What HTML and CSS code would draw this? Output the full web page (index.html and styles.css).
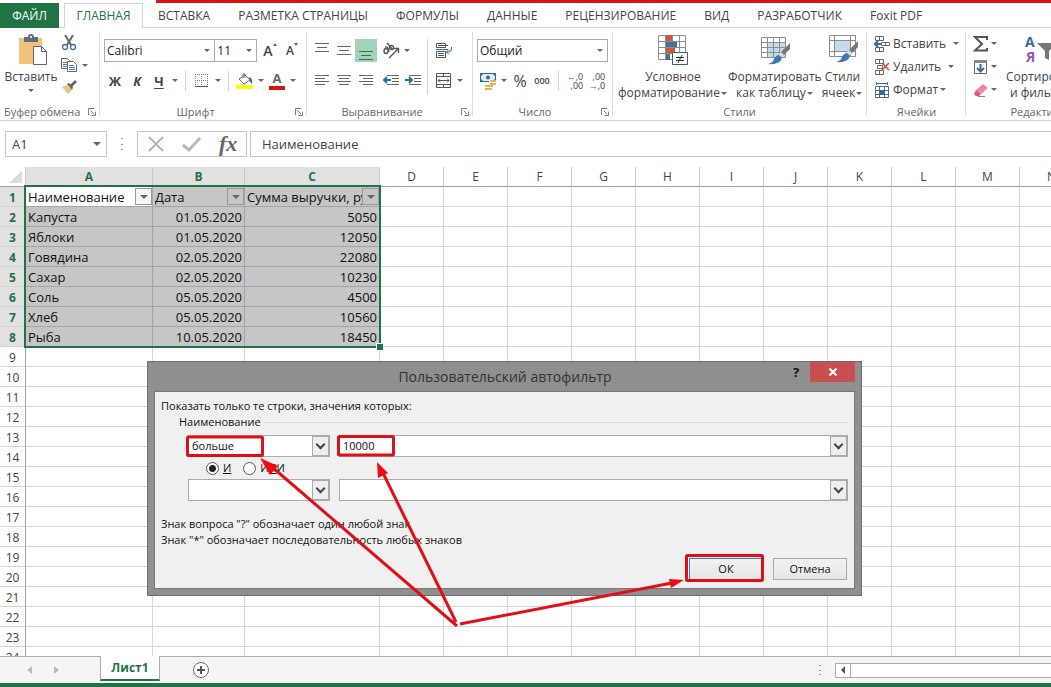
FILE: index.html
```html
<!DOCTYPE html>
<html lang="ru">
<head>
    <meta charset="UTF-8">
    <meta name="viewport" content="width=device-width, initial-scale=1.0">
    <title>Пользовательский автофильтр</title>
    <link rel="stylesheet" href="styles.css">
</head>
<body>
    <div class="top-line"></div>
    <nav class="tabs">
        <button class="tab tab-file">ФАЙЛ</button>
        <button class="tab tab-active">ГЛАВНАЯ</button>
        <button class="tab">ВСТАВКА</button>
        <button class="tab">РАЗМЕТКА СТРАНИЦЫ</button>
        <button class="tab">ФОРМУЛЫ</button>
        <button class="tab">ДАННЫЕ</button>
        <button class="tab">РЕЦЕНЗИРОВАНИЕ</button>
        <button class="tab">ВИД</button>
        <button class="tab">РАЗРАБОТЧИК</button>
        <button class="tab">Foxit PDF</button>
    </nav>

    <div class="ribbon">
        <!-- Clipboard -->
        <section class="group group-clipboard">
            <div class="group-content">
                <button class="big-button">
                    <svg width="32" height="32" viewBox="0 0 32 32">
                        <rect x="4" y="4" width="23" height="26" fill="#f0c27b"/>
                        <path d="M9 3h4q0-3 3-3t3 3h4v5H9z" fill="#5f6c7b"/>
                        <circle cx="16" cy="3" r="1" fill="#fff"/>
                        <path d="M18.500 12.500h8l5 5v13h-13z" fill="#fff" stroke="#666"/>
                        <path d="M26.500 12.500v5h5" fill="none" stroke="#666"/>
                    </svg>
                    <span>Вставить</span>
                    <i class="caret"></i>
                </button>
                <div class="icon-column">
                    <div class="row">
                        <button class="icon" aria-label="Вырезать">
                            <svg width="16" height="16" viewBox="0 0 16 16" fill="none">
                                <path d="M4 0l6 10M12 0L6 10" stroke="#666" stroke-width="2"/>
                                <circle cx="4" cy="12" r="2.500" stroke="#3f6f9f" stroke-width="1.300"/>
                                <circle cx="12" cy="12" r="2.500" stroke="#3f6f9f" stroke-width="1.300"/>
                            </svg>
                        </button>
                    </div>
                    <div class="row">
                        <button class="icon" aria-label="Копировать">
                            <svg width="16" height="16" viewBox="0 0 16 16" fill="#fff" stroke="#666">
                                <path d="M.5 1.500h6l2 2v8h-8z"/>
                                <path d="M2 5.500h4M2 7.500h4M2 9.500h4" stroke="#4f7fae"/>
                                <path d="M6.500 4.500h6l3 3v7h-9z"/>
                                <path d="M8 8.500h5M8 10.500h6M8 12.500h6" stroke="#4f7fae"/>
                            </svg>
                        </button>
                        <i class="caret"></i>
                    </div>
                    <div class="row">
                        <button class="icon" aria-label="Формат по образцу">
                            <svg width="16" height="16" viewBox="0 0 16 16">
                                <path d="M1 8l5-2 5 5-4 4z" fill="#f0c27b"/>
                                <path d="M6 5l2-1 4 4-1 3z" fill="#666"/>
                                <path d="M9 6l5-5 2 2-5 5z" fill="#666"/>
                            </svg>
                        </button>
                    </div>
                </div>
            </div>
            <div class="group-label"><span>Буфер обмена</span><svg class="launcher" viewBox="0 0 9 9"><path d="M.5 8V.5H7M3 3l4 4M8.500 4v4.500H4" fill="none" stroke="#666"/></svg></div>
        </section>

        <!-- Font -->
        <section class="group group-font">
            <div class="group-content stacked">
                <div class="row">
                    <label class="combo font-name"><select aria-label="Шрифт"><option>Calibri</option></select><i class="caret"></i></label>
                    <label class="combo font-size"><select aria-label="Размер"><option>11</option></select><i class="caret"></i></label>
                    <button class="icon grow">A<i></i></button>
                    <button class="icon grow shrink">A<i></i></button>
                </div>
                <div class="row">
                    <button class="icon letter">Ж</button>
                    <button class="icon letter italic">К</button>
                    <button class="icon letter underline">Ч</button>
                    <i class="caret"></i>
                    <i class="separator"></i>
                    <button class="icon" aria-label="Границы">
                        <svg width="14" height="14" viewBox="0 0 14 14" fill="none" stroke="#777">
                            <path d="M0 .5h13M0 6.500h13M.5 0v13M6.500 0v13M12.500 0v13" stroke-dasharray="1 1"/>
                            <path d="M0 12.500h13" stroke="#555"/>
                        </svg>
                    </button>
                    <i class="caret"></i>
                    <i class="separator"></i>
                    <button class="icon" aria-label="Цвет заливки">
                        <svg width="18" height="16" viewBox="0 0 18 16">
                            <path d="M3 6l6-4 5 5-6 4z" fill="#fff" stroke="#666"/>
                            <path d="M7 5V1q1-1 2 0v4" fill="none" stroke="#666"/>
                            <path d="M13 4q4 1 3 7q-2-1-3-5z" fill="#3f6f9f"/>
                            <path d="M0 12h17v4H0z" fill="#ff0"/>
                        </svg>
                    </button>
                    <i class="caret"></i>
                    <button class="icon letter font-color">A</button>
                    <i class="caret"></i>
                </div>
            </div>
            <div class="group-label"><span>Шрифт</span><svg class="launcher" viewBox="0 0 9 9"><path d="M.5 8V.5H7M3 3l4 4M8.500 4v4.500H4" fill="none" stroke="#666"/></svg></div>
        </section>

        <!-- Alignment -->
        <section class="group group-align">
            <div class="group-content">
                <div class="stacked align-main">
                    <div class="row">
                        <button class="icon" aria-label="По верхнему краю"><svg width="14" height="18" viewBox="0 0 14 18" stroke="#666"><path d="M0 1.500h14M2 5.500h10M0 9.500h14"/></svg></button>
                        <button class="icon" aria-label="По середине"><svg width="14" height="18" viewBox="0 0 14 18" stroke="#666"><path d="M0 4.500h14M2 8.500h10M0 12.500h14"/></svg></button>
                        <button class="icon pressed" aria-label="По нижнему краю"><svg width="14" height="18" viewBox="0 0 14 18" stroke="#3f6b58"><path d="M0 9.500h14M2 13.500h10M0 17.500h14"/></svg></button>
                        <button class="icon gap-left" aria-label="Ориентация">
                            <svg width="18" height="16" viewBox="0 0 18 16" fill="none" stroke="#555" stroke-width="1.400">
                                <ellipse cx="4" cy="8" rx="2" ry="2.500"/><path d="M3 4q3-1 4 5"/>
                                <path d="M5 0l6 7"/><circle cx="9.500" cy="4.500" r="2"/>
                                <path d="M7 15l9-9M12 5.500h4.500V10"/>
                            </svg>
                        </button>
                        <i class="caret"></i>
                    </div>
                    <div class="row">
                        <button class="icon" aria-label="По левому краю"><svg width="14" height="14" viewBox="0 0 14 14" stroke="#666"><path d="M0 1.500h14M0 4.500h10M0 7.500h14M0 10.500h10"/></svg></button>
                        <button class="icon" aria-label="По центру"><svg width="14" height="14" viewBox="0 0 14 14" stroke="#666"><path d="M0 1.500h14M2 4.500h10M0 7.500h14M2 10.500h10"/></svg></button>
                        <button class="icon" aria-label="По правому краю"><svg width="14" height="14" viewBox="0 0 14 14" stroke="#666"><path d="M0 1.500h14M4 4.500h10M0 7.500h14M4 10.500h10"/></svg></button>
                        <button class="icon gap-left" aria-label="Уменьшить отступ"><svg width="16" height="14" viewBox="0 0 16 14" fill="none" stroke="#666"><path d="M4 1.500h12M9 4.500h7M9 7.500h7M4 10.500h12"/><path d="M8 6H1M4 3L1 6l3 3" stroke="#2f6ca5" stroke-width="2"/></svg></button>
                        <button class="icon" aria-label="Увеличить отступ"><svg width="16" height="14" viewBox="0 0 16 14" fill="none" stroke="#666"><path d="M4 1.500h12M9 4.500h7M9 7.500h7M4 10.500h12"/><path d="M0 6h7M4 3l3 3-3 3" stroke="#2f6ca5" stroke-width="2"/></svg></button>
                    </div>
                </div>
                <i class="separator tall"></i>
                <div class="stacked">
                    <div class="row">
                        <button class="icon" aria-label="Перенести текст">
                            <svg width="17" height="16" viewBox="0 0 17 16" fill="none" stroke="#555">
                                <path d="M.5 .5h9v4h-9zM.5 8.500h9v6h-9zM2 2.500h10M2 10.500h6M2 12.500h6"/>
                                <path d="M0 6.500h12" stroke="#2f6ca5"/>
                                <path d="M15.500 4v2q0 3-3 3h-2M13 6.500L10.500 9l2.500 2.500" stroke="#2f6ca5"/>
                            </svg>
                        </button>
                    </div>
                    <div class="row">
                        <button class="icon" aria-label="Объединить">
                            <svg width="16" height="16" viewBox="0 0 16 16" fill="none" stroke="#555">
                                <path d="M.5 .5h14v14H.5zM0 3.500h15M0 11.500h15M7.500 0v3M7.500 12v3"/>
                                <path d="M2 7.500h11M4 5.500l-2 2 2 2M11 5.500l2 2-2 2"/>
                            </svg>
                        </button>
                        <i class="caret"></i>
                    </div>
                </div>
            </div>
            <div class="group-label"><span>Выравнивание</span><svg class="launcher" viewBox="0 0 9 9"><path d="M.5 8V.5H7M3 3l4 4M8.500 4v4.500H4" fill="none" stroke="#666"/></svg></div>
        </section>

        <!-- Number -->
        <section class="group group-number">
            <div class="group-content stacked">
                <div class="row">
                    <label class="combo number-format"><select aria-label="Числовой формат"><option>Общий</option></select><i class="caret"></i></label>
                </div>
                <div class="row">
                    <button class="icon" aria-label="Финансовый формат">
                        <svg width="18" height="18" viewBox="0 0 18 18">
                            <path d="M1 1h16v9H1z" fill="#2f6ca5"/><path d="M4 2h10l2 2v3l-2 2H4L2 7V4z" fill="#e6eff7"/><circle cx="9" cy="5.500" r="2" fill="#2f6ca5"/>
                            <path d="M10 8h7v6h-7zM5 12h9v5H5z" fill="#fff"/>
                            <path d="M11 8h6v2h-6zM11 11h6v2h-6zM6 13h8v2H6zM6 16h7v2H6z" fill="#e5b25a"/>
                        </svg>
                    </button>
                    <i class="caret"></i>
                    <button class="icon percent">%</button>
                    <button class="icon thousands">000</button>
                    <i class="separator"></i>
                    <button class="icon digits"><span><b>←</b>,0<br>,00</span></button>
                    <button class="icon digits"><span>,00<br><b>→</b>,0</span></button>
                </div>
            </div>
            <div class="group-label"><span>Число</span><svg class="launcher" viewBox="0 0 9 9"><path d="M.5 8V.5H7M3 3l4 4M8.500 4v4.500H4" fill="none" stroke="#666"/></svg></div>
        </section>

        <!-- Styles -->
        <section class="group group-styles">
            <div class="group-content">
                <button class="big-button">
                    <svg width="32" height="32" viewBox="0 0 32 32">
                        <path d="M1.500 1.500h27v24h-27zM1 7.500h27M1 13.500h27M1 19.500h27M8.500 1v24M15.500 1v24M22.500 1v24" fill="#fff" stroke="#8c8c8c"/>
                        <path d="M9 1h6v6H9zM9 14h9v5H9z" fill="#d0573b"/>
                        <path d="M9 8h11v5H9zM9 20h4v6H9z" fill="#41719c"/>
                        <path d="M15.500 18.500h15v12h-15z" fill="#fff" stroke="#3f5f6f"/>
                        <path d="M19 23.500h8M19 26.500h8M25 21l-4 8" stroke="#333"/>
                    </svg>
                    <span>Условное</span>
                    <span>форматирование<i class="caret"></i></span>
                </button>
                <button class="big-button">
                    <svg width="32" height="32" viewBox="0 0 32 32">
                        <path d="M2.500 3.500h24v20h-24z" fill="#fff" stroke="#8c8c8c"/>
                        <path d="M8 9h18v14H8z" fill="#c5daea"/>
                        <path d="M2 8.500h24M2 13.500h24M2 18.500h24M8.500 3v20M14.500 3v20M20.500 3v20" fill="none" stroke="#8c8c8c"/>
                        <path d="M31 9v6l-9 9-3-3z" fill="#777"/><path d="M22 18l3 3-3 3-3-3z" fill="#ddd"/>
                        <path d="M20 21l3 3q-2 7-14 6q5-1 6-5q2-4 5-4z" fill="#3a79b5"/>
                    </svg>
                    <span>Форматировать</span>
                    <span>как таблицу<i class="caret"></i></span>
                </button>
                <button class="big-button">
                    <svg width="32" height="32" viewBox="0 0 32 32">
                        <path d="M2.500 1.500h26v21h-26zM2 6.500h26M2 17.500h26M7.500 1v21M23.500 1v21" fill="#fff" stroke="#8c8c8c"/>
                        <path d="M8 7h15v10H8z" fill="#c5daea"/>
                        <path d="M31 7v6l-9 9-3-3z" fill="#777"/><path d="M22 16l3 3-3 3-3-3z" fill="#ddd"/>
                        <path d="M20 19l3 3q-2 7-14 6q5-1 6-5q2-4 5-4z" fill="#3a79b5"/>
                    </svg>
                    <span>Стили</span>
                    <span>ячеек<i class="caret"></i></span>
                </button>
            </div>
            <div class="group-label"><span>Стили</span></div>
        </section>

        <!-- Cells -->
        <section class="group group-cells">
            <div class="group-content list">
                <button class="list-button">
                    <svg width="16" height="16" viewBox="0 0 16 16" fill="#fff" stroke="#666"><path d="M1.500 .5h8v4h-8zM5.500 0v4M1.500 11.500h8v4h-8zM5.500 11v4M7.500 6.500h8v3h-8zM11.500 6v3"/><path d="M7 8H1M4 5L1 8l3 3" fill="none" stroke="#2f6ca5" stroke-width="2"/></svg>
                    <span>Вставить</span><i class="caret wide"></i>
                </button>
                <button class="list-button">
                    <svg width="16" height="16" viewBox="0 0 16 16" fill="#fff" stroke="#666"><path d="M1.500 .5h8v4h-8zM5.500 0v4M1.500 11.500h8v4h-8zM5.500 11v4M3.500 6.500h5v3h-5z"/><path d="M8 4l7 7M15 4l-7 7" stroke="#d8452e" stroke-width="1.500"/></svg>
                    <span>Удалить</span><i class="caret wide"></i>
                </button>
                <button class="list-button">
                    <svg width="16" height="16" viewBox="0 0 16 16" fill="#fff" stroke="#666"><path d="M1.500 4.500h13v11h-13zM1 8.500h14M1 12.500h14M5.500 4v11M10.500 4v11"/><path d="M2 1.500h12M2.500 0v3M13.500 0v3" stroke="#2f6ca5"/><path d="M5 8h6v5H5z" fill="#2f6ca5" stroke="none"/></svg>
                    <span>Формат</span><i class="caret"></i>
                </button>
            </div>
            <div class="group-label"><span>Ячейки</span></div>
        </section>

        <!-- Editing -->
        <section class="group group-editing">
            <div class="group-content">
                <div class="list">
                    <button class="list-button" aria-label="Сумма"><svg width="16" height="16" viewBox="0 0 16 16"><path d="M14 4V1H2l7 7-7 6.500h12V12" fill="none" stroke="#555" stroke-width="2"/></svg><i class="caret"></i></button>
                    <button class="list-button" aria-label="Заполнить"><svg width="16" height="16" viewBox="0 0 16 16"><path d="M1.500 1.500h12v13h-12z" fill="#fff" stroke="#666"/><path d="M1 1h13v3H1z" fill="#888"/><path d="M7.500 5v7M4 9l3.500 3.500L11 9" fill="none" stroke="#2f6ca5" stroke-width="2"/></svg><i class="caret"></i></button>
                    <button class="list-button" aria-label="Очистить"><svg width="16" height="16" viewBox="0 0 16 16"><path d="M3 8l7-6 5 4-7 6z" fill="#ea8a9b"/><path d="M3 8l5 4-2 2H3l-2-2z" fill="#e2566c"/><path d="M5 14.500h7" stroke="#888"/></svg><i class="caret"></i></button>
                </div>
                <button class="big-button">
                    <svg width="32" height="32" viewBox="0 0 32 32">
                        <text class="sort-letter" x="0" y="13" fill="#2f6ca5">А</text>
                        <text class="sort-letter" x="1" y="28" fill="#9a4fb5">Я</text>
                        <path d="M12 9h20l-8 8v9l-4-2v-7z" fill="#777"/>
                    </svg>
                    <span>Сортировка</span>
                    <span>и фильтр<i class="caret"></i></span>
                </button>
            </div>
            <div class="group-label"><span>Редактирование</span></div>
        </section>
    </div>

    <div class="formula-bar">
        <label class="name-box"><input type="text" value="A1" aria-label="Имя"><i class="caret"></i></label>
        <i class="dots"></i>
        <div class="formula-buttons">
            <button aria-label="Отмена ввода"><svg width="18" height="16" viewBox="0 0 18 16"><path d="M2 1l14 14M16 1L2 15" stroke="#b5b5b5" stroke-width="2"/></svg></button>
            <button aria-label="Ввод"><svg width="20" height="16" viewBox="0 0 20 16"><path d="M1 9l6 5L18 2" fill="none" stroke="#b9b9b9" stroke-width="3"/></svg></button>
            <button class="fx">fx</button>
        </div>
        <input class="formula-input" type="text" value="Наименование" aria-label="Строка формул">
    </div>

    <main class="sheet">
        <table class="grid">
            <colgroup id="gridColumns"></colgroup>
            <thead><tr id="gridHead"></tr></thead>
            <tbody id="gridBody"></tbody>
        </table>
        <div class="selection"></div>
    </main>

    <footer class="sheet-bar">
        <div class="sheet-nav">
            <button aria-label="Назад"><svg width="5" height="8" viewBox="0 0 5 8"><path d="M5 0v8L0 4z" fill="#bbb"/></svg></button>
            <button aria-label="Вперед"><svg width="5" height="8" viewBox="0 0 5 8"><path d="M0 0v8l5-4z" fill="#bbb"/></svg></button>
        </div>
        <button class="sheet-tab">Лист1</button>
        <button class="add-sheet" aria-label="Новый лист"><svg width="16" height="16" viewBox="0 0 16 16"><circle cx="8" cy="8" r="7.500" fill="#fff" stroke="#666"/><path d="M8 4v8M4 8h8" stroke="#555" stroke-width="2"/></svg></button>
        <i class="dots"></i>
        <div class="scrollbar"><button aria-label="Влево"><svg width="4" height="8" viewBox="0 0 4 8"><path d="M4 0v8L0 4z" fill="#555"/></svg></button></div>
    </footer>

    <!-- Custom filter dialog -->
    <form class="dialog" role="dialog" aria-labelledby="dialogTitle">
        <div class="dialog-title">
            <h1 id="dialogTitle">Пользовательский автофильтр</h1>
            <button type="button" class="dialog-help">?</button>
            <button type="button" class="dialog-close" aria-label="Закрыть"><svg width="8" height="8" viewBox="0 0 8 8"><path d="M.5 .5l7 7M7.500 .5l-7 7" stroke="#fff" stroke-width="2"/></svg></button>
        </div>
        <div class="dialog-body">
            <p>Показать только те строки, значения которых:</p>
            <fieldset>
                <legend>Наименование</legend>
                <div class="condition">
                    <label class="drop drop-operator"><select aria-label="Условие 1"><option>больше</option></select></label>
                    <label class="drop drop-value"><select aria-label="Значение 1"><option>10000</option></select></label>
                </div>
                <div class="condition-join">
                    <input type="radio" name="join" id="joinAnd" checked><label for="joinAnd"><u>И</u></label>
                    <input type="radio" name="join" id="joinOr"><label for="joinOr">И<u>Л</u>И</label>
                </div>
                <div class="condition">
                    <label class="drop drop-operator"><select aria-label="Условие 2"><option></option></select></label>
                    <label class="drop drop-value"><select aria-label="Значение 2"><option></option></select></label>
                </div>
            </fieldset>
            <div class="hints">
                <p>Знак вопроса "?" обозначает один любой знак</p>
                <p>Знак "*" обозначает последовательность любых знаков</p>
            </div>
            <div class="dialog-buttons">
                <button type="button" class="ok">ОК</button>
                <button type="button">Отмена</button>
            </div>
        </div>
        <!-- Red frames and arrows -->
        <svg class="marks" width="715" height="280" viewBox="147 361 715 280" fill="none" stroke="#e01018" stroke-width="3">
            <rect x="187.500" y="437" width="75" height="18.500" rx="1"/>
            <rect x="338.500" y="436.500" width="55" height="18.500" rx="1"/>
            <rect x="686.500" y="555.500" width="76" height="25" rx="1"/>
            <path d="M457 626L272 467M456 622L383 473M460 624L672 583"/>
            <path d="M260 458l18 8-8 9zM377 462l11 11-10 5zM684 580l-13 8-2-9z" fill="#f00a12" stroke="none"/>
        </svg>
    </form>

    <script>
        const columns = ['A', 'B', 'C', 'D', 'E', 'F', 'G', 'H', 'I', 'J', 'K', 'L', 'M', 'N'];
        const widths = { A: 127, B: 92, C: 135 };
        const rowCount = 24;
        const data = [
            ['Наименование', 'Дата', 'Сумма выручки, руб'],
            ['Капуста', '01.05.2020', '5050'],
            ['Яблоки', '01.05.2020', '12050'],
            ['Говядина', '02.05.2020', '22080'],
            ['Сахар', '02.05.2020', '10230'],
            ['Соль', '05.05.2020', '4500'],
            ['Хлеб', '05.05.2020', '10560'],
            ['Рыба', '10.05.2020', '18450']
        ];

        // Column widths and letters
        function buildHead() {
            let cols = '<col style="width: 26px">';
            let head = '<th class="corner"></th>';
            columns.forEach((name, i) => {
                cols += `<col style="width: ${widths[name] || 64}px">`;
                head += `<th class="${i < 3 ? 'selected' : ''}">${name}</th>`;
            });
            document.getElementById('gridColumns').innerHTML = cols;
            document.getElementById('gridHead').innerHTML = head;
        }

        // Numbered rows, the first ones filled from data
        function buildRows() {
            let html = '';
            for (let r = 0; r < rowCount; r++) {
                const row = data[r];
                html += `<tr><th class="${row ? 'selected' : ''}">${r + 1}</th>`;
                columns.forEach((name, c) => {
                    if (!row || c > 2) {
                        html += '<td></td>';
                    } else if (r === 0) {
                        html += `<td class="${c === 0 ? 'filled head current' : 'filled head'}"><div class="filter-cell"><span>${row[c]}</span><button aria-label="Фильтр"><i class="caret"></i></button></div></td>`;
                    } else {
                        html += `<td class="${c === 0 ? 'filled' : 'filled number'}">${row[c]}</td>`;
                    }
                });
                html += '</tr>';
            }
            document.getElementById('gridBody').innerHTML = html;
        }

        buildHead();
        buildRows();
    </script>
</body>
</html>
```

FILE: styles.css
```css
*,
*::before,
*::after {
    margin: 0;
    padding: 0;
    box-sizing: border-box;
}

body {
    display: flex;
    flex-direction: column;
    height: 100vh;
    overflow: hidden;
    position: relative;
    background-color: #fff;
    color: #444;
    font-family: "Open Sans", "Noto Sans", sans-serif;
    font-size: 12px;
    line-height: 16px;
}

button,
input,
select {
    font: inherit;
    color: inherit;
    background: none;
    border: none;
    border-radius: 0;
    outline: none;
}

select {
    appearance: none;
    width: 100%;
    height: 100%;
}

svg {
    display: block;
    flex-shrink: 0;
}

.top-line {
    flex: none;
    height: 3px;
    margin-left: 156px;
    background-color: #dd1512;
}

/* Ribbon tabs */
.tabs {
    display: flex;
    flex: none;
    height: 25px;
    border-bottom: 1px solid #d4d4d4;
}

.tab {
    height: 25px;
    padding: 0 14px;
    white-space: nowrap;
}

.tab-file {
    width: 59px;
    padding: 0;
    margin-right: 5px;
    background-color: #217346;
    color: #fff;
}

.tab-active {
    width: 79px;
    padding: 0;
    margin-right: 1px;
    border: 1px solid #d4d4d4;
    border-bottom: none;
    background-color: #fff;
    color: #217346;
}

/* Ribbon */
.ribbon {
    display: flex;
    flex: none;
    height: 93px;
    overflow: hidden;
    border-bottom: 1px solid #d4d4d4;
}

.group {
    display: flex;
    flex-direction: column;
    flex: none;
    padding: 4px 4px 0;
    position: relative;
}

.group::after {
    content: "";
    position: absolute;
    top: 4px;
    right: 0;
    bottom: 4px;
    width: 1px;
    background-color: #dcdcdc;
}

.group-clipboard { width: 100px; }
.group-font { width: 207px; }
.group-align { width: 166px; }
.group-number { width: 140px; }
.group-styles { width: 254px; }
.group-cells { width: 99px; }
.group-editing { width: 178px; }

.group-content {
    display: flex;
    height: 72px;
}

.group-label {
    display: flex;
    align-items: center;
    height: 16px;
    color: #666;
    font-size: 11px;
}

.group-label span {
    flex: 1;
    text-align: center;
    white-space: nowrap;
}

.launcher {
    width: 8px;
    height: 8px;
    margin-left: 8px;
}

.stacked {
    display: flex;
    flex-direction: column;
    gap: 7px;
    padding-top: 7px;
}

.row {
    display: flex;
    align-items: center;
    height: 23px;
}

.icon {
    display: flex;
    align-items: center;
    justify-content: center;
    flex: none;
    width: 22px;
    height: 23px;
}

.caret {
    display: inline-flex;
    flex: none;
    align-items: center;
    justify-content: center;
    width: 10px;
    height: 10px;
}

.caret::before {
    content: "";
    border: 3px solid transparent;
    border-top-color: #666;
    border-bottom: none;
}

.caret.wide {
    width: 20px;
}

.separator {
    flex: none;
    width: 11px;
    height: 20px;
    background: linear-gradient(#d4d4d4, #d4d4d4) center / 1px 100% no-repeat;
}

.separator.tall {
    height: 56px;
    margin-top: 7px;
}

.big-button {
    display: flex;
    flex-direction: column;
    align-items: center;
    flex: none;
    padding: 2px 0 0;
    white-space: nowrap;
}

.big-button svg {
    margin-bottom: 3px;
}

.big-button span .caret {
    width: 8px;
    vertical-align: middle;
}

.group-clipboard .big-button {
    width: 54px;
}

.icon-column .row {
    height: 22px;
}

.combo {
    display: flex;
    align-items: center;
    position: relative;
    height: 23px;
    border: 1px solid #ababab;
    color: #222;
}

.combo + .combo {
    border-left: none;
}

.combo select {
    padding-left: 2px;
}

.combo .caret {
    position: absolute;
    right: 2px;
}

.font-name { width: 112px; }
.font-size { width: 42px; margin-right: 2px; }
.number-format { width: 131px; }

.grow {
    font-size: 14px;
    font-weight: 600;
}

.grow i {
    align-self: flex-start;
    margin-top: 4px;
    border: 2px solid transparent;
    border-top: none;
    border-bottom: 3px solid #2f6ca5;
}

.shrink {
    font-size: 12px;
}

.shrink i {
    border-top: 3px solid #2f6ca5;
    border-bottom: none;
}

.letter {
    font-size: 13px;
    font-weight: bold;
}

.italic {
    font-style: italic;
}

.underline {
    text-decoration: underline;
    text-underline-offset: 2px;
}

.font-color {
    background: linear-gradient(#d11, #d11) center bottom 2px / 16px 4px no-repeat;
    line-height: 12px;
    padding-bottom: 5px;
    color: #666;
}

.pressed {
    background-color: #9fd5b7;
}

.gap-left {
    margin-left: 3px;
}

.align-main {
    width: 111px;
}

.percent {
    font-size: 16px;
}

.thousands {
    font-size: 9px;
    font-weight: 600;
}

.digits {
    font-size: 9px;
    line-height: 9px;
    text-align: right;
}

.digits b {
    color: #2f6ca5;
}

.group-styles {
    padding-left: 5px;
    padding-right: 6px;
}

.group-styles .group-content {
    justify-content: space-between;
}

.list {
    display: flex;
    flex-direction: column;
}

.list-button {
    display: flex;
    align-items: center;
    height: 23px;
    padding-left: 3px;
    white-space: nowrap;
}

.list-button span {
    margin-left: 3px;
}

.group-editing .list {
    width: 36px;
}

.sort-letter {
    font-size: 14px;
    font-weight: bold;
}

/* Formula bar */
.formula-bar {
    display: flex;
    flex: none;
    height: 46px;
    padding: 10px 0 10px 5px;
    font-size: 13px;
}

.name-box {
    display: flex;
    align-items: center;
    width: 102px;
    border: 1px solid #c6c6c6;
}

.name-box input {
    flex: 1;
    min-width: 0;
    padding-left: 6px;
}

.name-box .caret {
    margin-right: 4px;
}

.name-box .caret::before {
    border-width: 4px;
    border-bottom: none;
}

.dots {
    flex: none;
    width: 30px;
    background: radial-gradient(circle, #999 1px, transparent 1px) center / 4px 5px no-repeat,
        radial-gradient(circle, #999 1px, transparent 1px) center top 5px / 4px 5px no-repeat,
        radial-gradient(circle, #999 1px, transparent 1px) center bottom 5px / 4px 5px no-repeat;
}

.formula-buttons {
    display: flex;
    align-items: center;
    justify-content: space-around;
    width: 110px;
    margin-right: 3px;
    border: 1px solid #c6c6c6;
}

.fx {
    color: #666;
    font-family: "Liberation Serif", serif;
    font-size: 22px;
    font-style: italic;
    font-weight: bold;
}

.formula-input {
    flex: 1;
    min-width: 0;
    padding-left: 11px;
    border: 1px solid #c6c6c6;
    border-right: none;
}

/* Grid */
.sheet {
    flex: 1;
    min-height: 0;
    overflow: hidden;
    position: relative;
}

.grid {
    width: 1084px;
    table-layout: fixed;
    border-collapse: separate;
    border-spacing: 0;
    color: #111;
    font-size: 13px;
}

.grid tr {
    height: 20px;
}

.grid th {
    height: 20px;
    border-right: 1px solid #c9c9c9;
    border-bottom: 1px solid #9f9f9f;
    color: #444;
    font-size: 12px;
    font-weight: normal;
    line-height: 16px;
}

.grid tbody th {
    padding-top: 2px;
    border-right-color: #9f9f9f;
    border-bottom-color: #d4d4d4;
}

.grid th.selected {
    background-color: #e1e1e1;
    color: #217346;
    font-weight: bold;
}

.grid .corner {
    background: linear-gradient(135deg, transparent 50%, #dcdcdc 50%) right 3px bottom 3px / 12px 12px no-repeat;
}

.grid td {
    height: 20px;
    padding: 2px 2px 0;
    border-right: 1px solid #d4d4d4;
    border-bottom: 1px solid #d4d4d4;
    line-height: 17px;
    white-space: nowrap;
    overflow: hidden;
}

.grid td.filled {
    background-color: #c6c6c6;
    border-color: #a5a5a5;
}

.grid td.head {
    padding-top: 0;
}

.grid td.current {
    background-color: #fff;
}

.grid td.number {
    text-align: right;
}

.filter-cell {
    display: flex;
    align-items: center;
    height: 19px;
    margin-right: -2px;
}

.filter-cell span {
    flex: 1;
    min-width: 0;
    padding-top: 2px;
    overflow: hidden;
}

.filter-cell button {
    display: flex;
    align-items: center;
    justify-content: center;
    width: 17px;
    height: 17px;
    border: 1px solid #9a9a9a;
    background-color: #c6c6c6;
}

.filter-cell .caret::before {
    border-width: 4px;
    border-bottom: none;
}

.current button {
    background-color: #f3f6fa;
}

.selection {
    position: absolute;
    top: 18px;
    left: 24px;
    width: 357px;
    height: 163px;
    border: 2px solid #217346;
}

.selection::after {
    content: "";
    position: absolute;
    right: -4px;
    bottom: -4px;
    width: 7px;
    height: 7px;
    border: 1px solid #fff;
    border-right: none;
    border-bottom: none;
    background-color: #217346;
}

/* Sheet tabs */
.sheet-bar {
    display: flex;
    align-items: center;
    flex: none;
    height: 31px;
    border-top: 1px solid #ababab;
    border-bottom: 4px solid #217346;
    background-color: #f5f5f5;
}

.sheet-nav {
    display: flex;
    gap: 22px;
    width: 100px;
    padding-left: 27px;
}

.sheet-tab {
    width: 60px;
    height: 25px;
    align-self: flex-start;
    margin-top: -1px;
    border: 1px solid #ababab;
    border-top: none;
    border-bottom: 2px solid #217346;
    background-color: #fff;
    color: #217346;
    font-weight: bold;
}

.add-sheet {
    margin-left: 33px;
}

.sheet-bar .dots {
    height: 24px;
    margin-left: auto;
}

.scrollbar {
    width: 216px;
    height: 15px;
    border: 1px solid #ababab;
    border-right: none;
    background-color: #fff;
}

.scrollbar button {
    display: flex;
    align-items: center;
    justify-content: center;
    width: 15px;
    height: 13px;
    border-right: 1px solid #ababab;
}

/* Dialog */
.dialog {
    position: absolute;
    top: 361px;
    left: 147px;
    width: 715px;
    padding: 0 6px 6px;
    border: 1px solid #6e6e6e;
    background-color: #8f8f8f;
    color: #111;
    font-size: 11px;
}

.dialog-title {
    display: flex;
    align-items: flex-start;
    height: 29px;
}

.dialog-title h1 {
    flex: 1;
    padding-left: 74px;
    color: #333;
    font-size: 14px;
    font-weight: normal;
    line-height: 30px;
    text-align: center;
}

.dialog-help {
    width: 28px;
    height: 20px;
    font-size: 13px;
    font-weight: bold;
}

.dialog-close {
    display: flex;
    align-items: center;
    justify-content: center;
    width: 45px;
    height: 20px;
    background-color: #c75050;
}

.dialog-body {
    padding: 6px 6px 8px;
    border: 1px solid #777;
    background-color: #f0f0f0;
}

.dialog fieldset {
    margin-left: 18px;
    border: none;
    background: linear-gradient(#dcdcdc, #dcdcdc) left 86px top / 100% 1px no-repeat;
}

.condition {
    display: flex;
    gap: 9px;
    padding-left: 9px;
}

.dialog legend + .condition {
    margin-top: 5px;
}

.drop {
    display: flex;
    height: 22px;
    position: relative;
    border: 1px solid #ababab;
    background-color: #fff;
}

.drop select {
    padding-left: 3px;
}

.drop::after {
    content: "";
    position: absolute;
    top: 0;
    right: 0;
    width: 17px;
    height: 20px;
    border: 1px solid #ababab;
    background-color: #eee;
    pointer-events: none;
}

.drop::before {
    content: "";
    position: absolute;
    top: 5px;
    right: 5px;
    z-index: 1;
    width: 7px;
    height: 7px;
    border: solid #444;
    border-width: 0 2px 2px 0;
    transform: rotate(45deg);
    pointer-events: none;
}

.drop-operator {
    width: 142px;
}

.drop-value {
    flex: 1;
}

.condition-join {
    display: flex;
    align-items: center;
    height: 22px;
    padding-left: 27px;
}

.condition-join input {
    appearance: none;
    width: 13px;
    height: 13px;
    margin-right: 4px;
    border: 1px solid #555;
    border-radius: 50%;
    background-color: #fff;
}

.condition-join input:checked {
    background: radial-gradient(circle, #222 3px, #fff 4px);
}

.condition-join label {
    margin-right: 12px;
}

.hints {
    margin-top: 15px;
}

.dialog-buttons {
    display: flex;
    justify-content: flex-end;
    gap: 10px;
    margin: 10px 1px 0 0;
}

.dialog-buttons button {
    width: 74px;
    height: 22px;
    border: 1px solid #ababab;
    background: linear-gradient(#f2f2f2, #e6e6e6);
}

.dialog-buttons .ok {
    border-color: #3c7fb1;
}

.marks {
    position: absolute;
    top: -1px;
    left: -1px;
    pointer-events: none;
}
```
